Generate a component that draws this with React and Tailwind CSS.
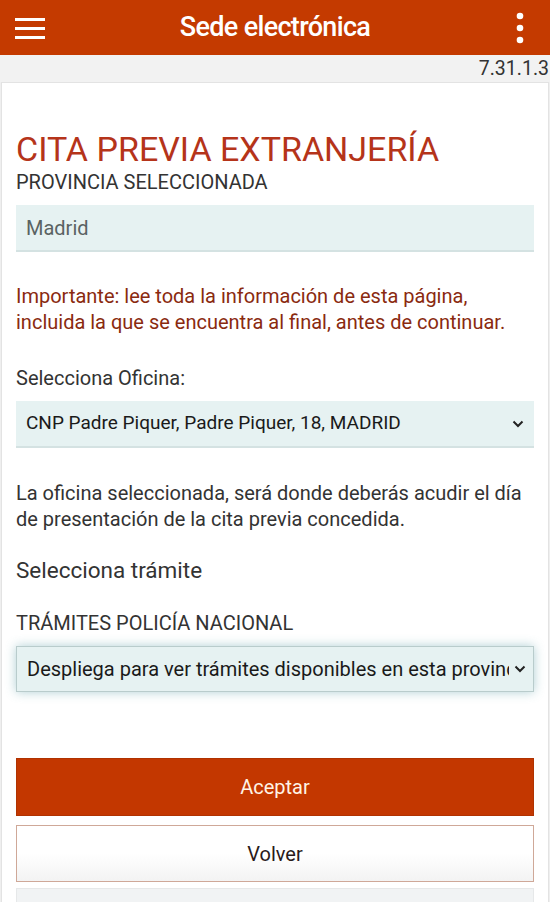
export default function App() {
    return (
        <div className="w-[550px] h-[902px] overflow-hidden bg-[#efefef] font-['Roboto',sans-serif]">
            <header className="h-[55px] bg-[#c43a00] grid grid-cols-[60px_1fr_60px] items-center pl-[15px] pr-[25px] shadow-[0_2px_3px_rgba(0,0,0,0.25)]">
                <svg width="30" height="24" viewBox="0 0 30 24">
                    <rect x="0" y="2" width="30" height="3" fill="#fff" />
                    <rect x="0" y="11" width="30" height="3" fill="#fff" />
                    <rect x="0" y="20" width="30" height="3" fill="#fff" />
                </svg>
                <h1 className="text-white text-[27px] font-medium tracking-tight text-center ml-[10px]">Sede electrónica</h1>
                <div className="flex justify-end">
                    <svg width="10" height="32" viewBox="0 0 10 32">
                        <circle cx="5" cy="4" r="3.3" fill="#fff" />
                        <circle cx="5" cy="16" r="3.3" fill="#fff" />
                        <circle cx="5" cy="28" r="3.3" fill="#fff" />
                    </svg>
                </div>
            </header>
            <div className="h-[27px] flex items-center justify-end pr-[1px] text-[19.5px] text-[#333] bg-[#f2f2f2]">7.31.1.3</div>
            <main className="mx-[1px] bg-white border border-[#e3e3e3] px-[14px] pt-[46px] pb-10">
                <h2 className="text-[34px] leading-[40px] text-[#b5341a] font-normal">CITA PREVIA EXTRANJERÍA</h2>
                <p className="text-[20px] leading-[24px] text-[#333] mt-[1px]">PROVINCIA SELECCIONADA</p>
                <div className="mt-[11px] h-[47px] bg-[#e6f2f2] border-b-2 border-[#d4e2e2] flex items-center px-[10px] text-[20px] text-[#5a6363]">Madrid</div>
                <p className="mt-[31px] text-[20px] leading-[26px] text-[#8a2a0f]">
                    Importante: lee toda la información de esta página,<br />incluida la que se encuentra al final, antes de continuar.
                </p>
                <p className="mt-[31px] text-[20px] leading-[24px] text-[#333]">Selecciona Oficina:</p>
                <div className="mt-[11px] h-[47px] bg-[#e6f2f2] border-b-2 border-[#d4e2e2] flex items-center justify-between px-[10px] text-[19px] text-[#1a1a1a]">
                    <span>CNP Padre Piquer, Padre Piquer, 18, MADRID</span>
                    <svg width="12" height="8" viewBox="0 0 12 8"><path d="M1.5 1.5 L6 6 L10.5 1.5" fill="none" stroke="#222" strokeWidth="2" /></svg>
                </div>
                <p className="mt-[32px] text-[20px] leading-[26px] text-[#333]">
                    La oficina seleccionada, será donde deberás acudir el día<br />de presentación de la cita previa concedida.
                </p>
                <p className="mt-[24px] text-[22.5px] leading-[28px] text-[#333]">Selecciona trámite</p>
                <p className="mt-[27px] text-[20px] leading-[24px] text-[#333]">TRÁMITES POLICÍA NACIONAL</p>
                <div className="mt-[11px] h-[46px] bg-[#e6f2f2] border border-[#b9cccc] shadow-[0_0_10px_rgba(80,150,160,0.45)] flex items-center justify-between pl-[10px] pr-[7px] text-[20px] text-[#1a1a1a]">
                    <span className="whitespace-nowrap overflow-hidden w-[482px]">Despliega para ver trámites disponibles en esta provincia</span>
                    <svg width="12" height="8" viewBox="0 0 12 8"><path d="M1.5 1.5 L6 6 L10.5 1.5" fill="none" stroke="#222" strokeWidth="2" /></svg>
                </div>
                <button className="mt-[66px] w-full h-[58px] bg-[#c33700] text-[#fff3e6] text-[20px] border border-[#b03200]">Aceptar</button>
                <button className="mt-[9px] w-full h-[57px] bg-gradient-to-b from-white via-white to-[#f3f3f3] text-[#2a1a1a] text-[20px] border border-[#cfa898]">Volver</button>
                <div className="mt-[6px] w-full h-[57px] bg-[#f1f3f4] border border-[#e6e8e9]"></div>
            </main>
        </div>
    );
}
